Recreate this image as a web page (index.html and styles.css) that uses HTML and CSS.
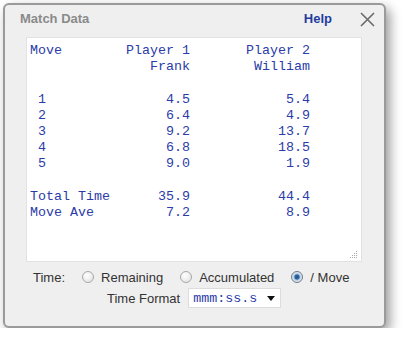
FILE: index.html
```html
<!DOCTYPE html>
<html>
<head>
<meta charset="utf-8">
<link rel="stylesheet" href="styles.css">
</head>
<body>
<div class="dialog">
  <div class="header">
    <span class="title">Match Data</span>
    <span class="help">Help</span>
    <svg class="close" width="15" height="15" viewBox="0 0 15 15"><path d="M1 1 L14 14 M14 1 L1 14" stroke="#6a6a6a" stroke-width="1.6" fill="none"/></svg>
  </div>
  <div class="data">
<pre class="text">Move        Player 1       Player 2
               Frank        William

 1               4.5            5.4
 2               6.4            4.9
 3               9.2           13.7
 4               6.8           18.5
 5               9.0            1.9

Total Time      35.9           44.4
Move Ave         7.2            8.9</pre>
    <svg class="grip" width="9" height="9" viewBox="0 0 9 9">
      <rect x="7" y="1" width="1" height="1" fill="#aaa"/>
      <rect x="5" y="3" width="1" height="1" fill="#aaa"/>
      <rect x="7" y="3" width="1" height="1" fill="#aaa"/>
      <rect x="3" y="5" width="1" height="1" fill="#aaa"/>
      <rect x="5" y="5" width="1" height="1" fill="#aaa"/>
      <rect x="7" y="5" width="1" height="1" fill="#aaa"/>
      <rect x="1" y="7" width="1" height="1" fill="#aaa"/>
      <rect x="3" y="7" width="1" height="1" fill="#aaa"/>
      <rect x="5" y="7" width="1" height="1" fill="#aaa"/>
      <rect x="7" y="7" width="1" height="1" fill="#aaa"/>
    </svg>
  </div>
  <div class="timerow">
    <span class="lbl">Time:</span>
    <span class="radio"></span><span class="opt">Remaining</span>
    <span class="radio"></span><span class="opt">Accumulated</span>
    <span class="radio checked"></span><span class="opt">/ Move</span>
  </div>
  <div class="formatrow">
    <span class="lbl">Time Format</span>
    <div class="select"><span class="selval">mmm:ss.s</span><span class="arrow"></span></div>
  </div>
</div>
</body>
</html>
```
FILE: styles.css
```css
html, body {
  margin: 0;
  padding: 0;
  background: #ffffff;
}
body {
  padding: 3px 0 0 3px;
  font-family: "Liberation Sans", Arial, sans-serif;
}
.dialog {
  box-sizing: border-box;
  width: 383px;
  height: 325px;
  border: 2px solid #9a9a9a;
  border-radius: 6px;
  background: #efefef;
  box-shadow: 4px 5px 12px rgba(0,0,0,0.4);
  display: flex;
  flex-direction: column;
}
.header {
  height: 32px;
  display: flex;
  align-items: flex-start;
  padding: 6px 9px 0 15px;
  box-sizing: border-box;
}
.title {
  font-size: 13px;
  font-weight: bold;
  color: #8a8a8a;
  line-height: 15px;
}
.help {
  margin-left: auto;
  font-size: 13px;
  font-weight: bold;
  color: #1f3d9e;
  line-height: 15px;
}
.close {
  margin-left: 28px;
  margin-top: 1px;
}
.data {
  position: relative;
  margin-left: 21px;
  width: 336px;
  height: 225px;
  box-sizing: border-box;
  background: #ffffff;
  border: 1px solid #e2e2e2;
}
.text {
  margin: 0;
  padding: 5px 0 0 3px;
  font-family: "Liberation Mono", "Courier New", monospace;
  font-size: 13.33px;
  line-height: 16.2px;
  color: #2b3ca8;
}
.grip {
  position: absolute;
  right: 3px;
  bottom: 2px;
}
.timerow {
  margin-top: 5px;
  height: 20px;
  display: flex;
  align-items: center;
  padding-left: 28px;
  font-size: 13px;
  color: #333;
}
.lbl {
  font-size: 13px;
  color: #333;
}
.radio {
  box-sizing: border-box;
  width: 12px;
  height: 12px;
  border-radius: 50%;
  border: 1px solid #a8a8a8;
  background: radial-gradient(circle at 40% 35%, #ffffff 0%, #e8e8e8 70%, #d8d8d8 100%);
  margin-left: 17px;
  margin-right: 7px;
}
.radio.checked {
  border-color: #6b7a8c;
  background: radial-gradient(circle, #1d4f86 0%, #2f6aa8 30%, #b9cbe0 45%, #eef2f6 75%, #d8dde4 100%);
}
.formatrow {
  margin-top: 1px;
  height: 20px;
  display: flex;
  align-items: center;
  padding-left: 102px;
}
.select {
  margin-left: 8px;
  box-sizing: border-box;
  width: 93px;
  height: 20px;
  background: #ffffff;
  border: 1px solid #dcdcdc;
  display: flex;
  align-items: center;
  padding-left: 4px;
}
.selval {
  font-family: "Liberation Mono", "Courier New", monospace;
  font-size: 13.33px;
  color: #2b3ca8;
}
.arrow {
  margin-left: auto;
  margin-right: 5px;
  width: 0;
  height: 0;
  border-left: 4px solid transparent;
  border-right: 4px solid transparent;
  border-top: 5px solid #111;
}
```
